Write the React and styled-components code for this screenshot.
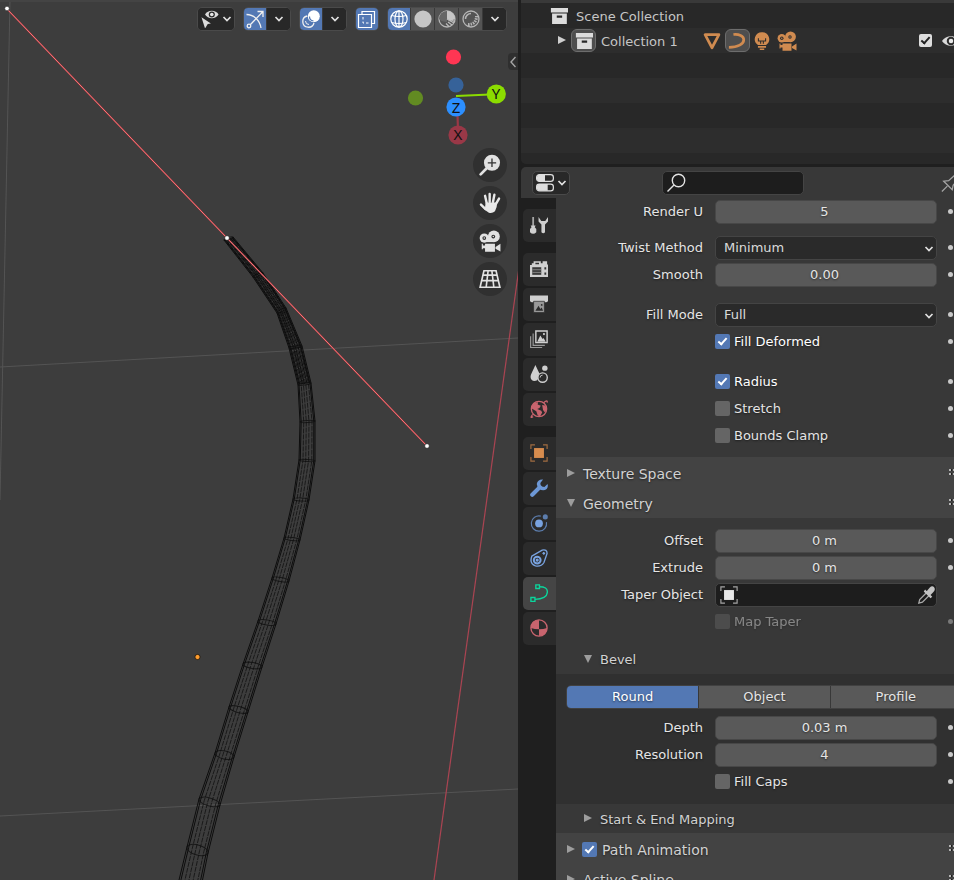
import React, { useState } from "react";
import styled, { createGlobalStyle, css } from "styled-components";

const GlobalStyle = createGlobalStyle`
  *, *::before, *::after { box-sizing: border-box; }
  body { margin: 0; background: #1f1f1f; overflow: hidden; }
  body, button, input, select { font-family: "DejaVu Sans", sans-serif; font-size: 13px; }
  button { padding: 0; border: 0; background: none; color: inherit; cursor: pointer; }
  svg { display: block; flex: none; }
`;

/* ---------- shell ---------- */

const Workspace = styled.div`
  display: grid;
  grid-template-columns: minmax(0, 1fr) 433px;
  gap: 3px;
  height: 100vh;
  color: #e5e5e5;
  line-height: 16px;
`;

const Viewport = styled.main`
  position: relative;
  display: flex;
  flex-direction: column;
  overflow: hidden;
  background: #3d3d3d;
  border-top: 2px solid #444;
`;

const Sidebar = styled.aside`
  display: flex;
  flex-direction: column;
  gap: 3px;
  min-width: 0;
  overflow: hidden;
`;

/* ---------- viewport ---------- */

const Scene = styled.svg`
  position: absolute;
  top: -2px;
  left: 0;
  width: 100%;
  height: 100vh;
`;

const ViewHeader = styled.header`
  position: relative;
  display: flex;
  justify-content: flex-end;
  gap: 8px;
  padding: 5px 11px 0 0;
`;

const ToolGroup = styled.div`
  display: flex;
  height: 24px;
  border: 1px solid #4a4a4a;
  border-radius: 5px;
  overflow: hidden;
  background: #282828;
`;

const fills = { on: "#5378b4", dark: "#282828", grey: "#545454" };

const ToolButton = styled.button`
  display: flex;
  align-items: center;
  justify-content: center;
  gap: 3px;
  width: ${(p) => (p.$wide ? "36px" : "24px")};
  background: ${(p) => fills[p.$fill || "dark"]};
  & + & { border-left: 1px solid #3a3a3a; }
  &:first-child { width: ${(p) => (p.$wide ? "36px" : "22px")}; }
`;

const Gizmo = styled.svg`
  position: absolute;
  top: 46px;
  right: 10px;
  font-family: "Noto Sans", sans-serif;
`;

const NavColumn = styled.nav`
  position: absolute;
  top: 146px;
  right: 11px;
  display: flex;
  flex-direction: column;
  gap: 4px;
`;

const NavButton = styled.button`
  display: flex;
  align-items: center;
  justify-content: center;
  width: 34px;
  height: 34px;
  border-radius: 50%;
  background: #303030;
`;

const RegionToggle = styled.button`
  position: absolute;
  top: 51px;
  right: 0;
  display: flex;
  align-items: center;
  justify-content: center;
  width: 10px;
  height: 17px;
  border-radius: 4px 0 0 4px;
  background: #2f2f2f;
`;

const rings = [
  [224, 240, 233, 237, 1],
  [253, 277, 263, 273, 1],
  [277, 313, 286, 308, 1],
  [289, 348, 302, 346, 1],
  [298, 385, 311, 383, 1],
  [300, 422, 315, 421, 1],
  [299, 460, 315, 461, 1],
  [293, 499, 309, 500, 1.5],
  [284, 538, 300, 540, 1.5],
  [272, 578, 289, 581, 2],
  [258, 621, 276, 624, 2.5],
  [243, 664, 262, 667, 3],
  [229, 707, 248, 712, 3],
  [215, 753, 234, 757, 4],
  [199, 799, 220, 805, 4],
  [187, 847, 208, 853, 5],
  [173, 905, 196, 912, 5],
];

const strand = (t) =>
  rings.map(([x1, y1, x2, y2]) => `${x1 + (x2 - x1) * t},${y1 + (y2 - y1) * t}`).join(" ");

function CurveScene() {
  return (
    <Scene viewBox="0 0 518 880" preserveAspectRatio="xMidYMid slice" aria-label="Curve in wireframe">
      <g stroke="#545454" strokeWidth="1">
        <path d="M0 367 518 338M0 816 518 789M10 0 0 500" />
      </g>
      <path d="M519 268 434 880" stroke="#ab4452" strokeWidth="1.2" />
      <g fill="none" stroke="#0d0d0d" strokeWidth="1">
        {[0, 0.08, 0.92, 1].map((t) => (
          <polyline key={t} points={strand(t)} />
        ))}
        {[0.25, 0.42, 0.6, 0.8].map((t) => (
          <polyline key={t} points={strand(t)} strokeOpacity=".75" strokeDasharray="5 1" />
        ))}
        {[0.15, 0.34, 0.5, 0.7, 0.87].map((t) => (
          <polyline key={t} points={strand(t).split(" ").slice(0, 5).join(" ")} />
        ))}
        {rings.map(([x1, y1, x2, y2, ry]) => (
          <ellipse
            key={y1}
            rx={Math.hypot(x2 - x1, y2 - y1) / 2}
            ry={ry}
            strokeOpacity=".75"
            transform={`translate(${(x1 + x2) / 2} ${(y1 + y2) / 2}) rotate(${(Math.atan2(y2 - y1, x2 - x1) * 180) / Math.PI})`}
          />
        ))}
      </g>
      <path d="M7 9 227 238 427 446" fill="none" stroke="#8e3a3f" strokeWidth="1.6" />
      <path d="M7 9 227 238 427 446" fill="none" stroke="#ff7478" strokeWidth="1" />
      <g fill="#fff" stroke="#222" strokeWidth=".6">
        <circle cx="7" cy="8.5" r="2.3" />
        <circle cx="227" cy="238" r="2.3" />
        <circle cx="427" cy="446" r="2.3" />
      </g>
      <circle cx="197.5" cy="657" r="2.6" fill="#ff9d2e" stroke="#1c1208" strokeWidth=".8" />
    </Scene>
  );
}

function AxisGizmo() {
  return (
    <Gizmo width="104" height="98" viewBox="404 48 104 98" aria-label="View orientation">
      <path d="M457.5 115 458 130" stroke="#9b3846" strokeWidth="2.2" />
      <circle cx="453.5" cy="57" r="7.6" fill="#ff3653" />
      <circle cx="456" cy="85" r="7.6" fill="#366299" />
      <circle cx="415.5" cy="98" r="7.6" fill="#628b22" />
      <path d="M456 96 490 94.5" stroke="#8bdc00" strokeWidth="2.2" />
      <circle cx="458" cy="135" r="9.6" fill="#993847" />
      <circle cx="496.3" cy="94" r="9.6" fill="#8bdc00" />
      <circle cx="456" cy="107" r="9.6" fill="#2c8fff" />
      <g fill="#111" fontSize="15" textAnchor="middle">
        <text x="458" y="140">X</text>
        <text x="496" y="99">Y</text>
        <text x="456" y="113">Z</text>
      </g>
    </Gizmo>
  );
}

/* ---------- icons ---------- */

const Svg = ({ size = 20, children, ...rest }) => (
  <svg width={size} height={size} viewBox="0 0 20 20" fill="none" aria-hidden="true" {...rest}>
    {children}
  </svg>
);

const Chevron = () => (
  <svg width="10" height="8" viewBox="0 0 10 8" fill="none" stroke="#e0e0e0" strokeWidth="1.7" aria-hidden="true">
    <path d="M1.5 2 5 5.500 8.500 2" />
  </svg>
);

const VisibilityIcon = () => (
  <Svg size={18}>
    <path d="M4.500 5C7.500-.5 16.500-.5 19.500 5 16.500 10.500 7.500 10.500 4.500 5z" fill="#dcdcdc" />
    <circle cx="12" cy="5" r="3.400" fill="#282828" />
    <circle cx="12" cy="5" r="2" fill="#e8e8e8" />
    <path d="M.5 8 11 15 7.500 15.500 4.500 20.500z" fill="#dcdcdc" />
  </Svg>
);

const GizmoIcon = () => (
  <Svg stroke="#f0f0f0" strokeWidth="1.300">
    <path d="M1.500 5.500C9 5.500 15 11.500 16 19" />
    <path d="M5.500 15.500 18 2.500M12.500 2.500H18V8" />
    <circle cx="4" cy="17" r="1.800" />
  </Svg>
);

const OverlayIcon = () => (
  <Svg>
    <path d="M6.200 7A5.700 5.700 0 1 0 13 14" stroke="#f0f0f0" strokeWidth="1.300" />
    <circle cx="12.800" cy="7.200" r="6" fill="#fff" />
    <path d="M8.500 7.500a4.500 4.500 0 0 0 4 4.500" stroke="#5378b4" strokeWidth="1.200" />
    <path d="M4.500 12a3.500 3.500 0 0 0 3.500 3.500" stroke="#f0f0f0" strokeWidth="1" />
  </Svg>
);

const XrayIcon = () => (
  <Svg stroke="#fff" strokeWidth="1.200">
    <path d="M5 5.500V2.500H17.500V14.500H14.500" />
    <path d="M1.500 5.500H14.500V18.500H1.500z" />
    <path d="M6 8V14H12" strokeDasharray="2.500 2" strokeWidth="1" />
  </Svg>
);

const WireGlobeIcon = () => (
  <Svg stroke="#fff" strokeWidth="1.200">
    <circle cx="10" cy="10" r="8.200" />
    <ellipse cx="10" cy="10" rx="4" ry="8.200" />
    <path d="M2.500 6.500Q10 8.500 17.500 6.500M2.500 13.500Q10 15.500 17.500 13.500M10 2V18" />
  </Svg>
);

const SolidIcon = () => (
  <Svg>
    <circle cx="10" cy="10" r="8.600" fill="#c6c6c6" />
  </Svg>
);

const MaterialIcon = () => (
  <Svg>
    <circle cx="10" cy="10" r="8" stroke="#b5b5b5" strokeWidth="1.300" />
    <path d="M10 2A8 8 0 0 0 2 10 9 9 0 0 0 10 13z" fill="#666" />
    <path d="M10 2A8 8 0 0 1 18 10L13 12.500 10 10z" fill="#c6c6c6" />
    <path d="M10 10 17 14M11 13l4 3M9 14.500l3 3M15 11l3 2" stroke="#bbb" strokeWidth="1.200" />
  </Svg>
);

const RenderedIcon = () => (
  <Svg stroke="#b5b5b5">
    <circle cx="10" cy="10" r="8" strokeWidth="1.300" />
    <path d="M4.500 10A5.500 5.500 0 0 1 10 4.500" strokeWidth="1.500" />
    <path d="M7 15.500Q15.500 15.500 15.500 7" strokeWidth="3" strokeDasharray="1.500 1" />
  </Svg>
);

const ZoomIcon = () => (
  <Svg size={22}>
    <path d="M1.500 18.500 7 13" stroke="#e2e2e2" strokeWidth="2.500" strokeLinecap="round" />
    <circle cx="11.800" cy="8" r="7.300" fill="#e2e2e2" />
    <path d="M8 8H15.600M11.800 4.200V11.800" stroke="#333" strokeWidth="1.200" />
  </Svg>
);

const HandIcon = () => (
  <Svg size={22}>
    <g stroke="#e8e8e8" strokeLinecap="round" strokeWidth="2.200">
      <path d="M7 10 5.500 3.500M9.700 9V1.800M12.700 9 14 2.500M15.300 11 18.200 6M6 15.500 1.800 11.500" />
    </g>
    <path d="M6 9.500 16.500 9.500Q16.500 14.500 14.500 17.500 12 19.800 9 18.800 5.500 17.500 3 13.500L5.500 14z" fill="#e8e8e8" />
  </Svg>
);

const CameraIcon = ({ color = "#e2e2e2", hole = "#303030", size = 22 }) => (
  <Svg size={size}>
    <circle cx="4.800" cy="7.300" r="4.200" fill={color} />
    <circle cx="13.500" cy="5.800" r="5.400" fill={color} />
    <path d="M5 7H13V11H5z" fill={color} />
    <circle cx="4.800" cy="7.300" r="1.700" fill={hole} />
    <circle cx="4.800" cy="7.300" r=".7" fill={color} />
    <circle cx="13" cy="6" r="1.700" fill={hole} />
    <circle cx="13" cy="6" r=".7" fill={color} />
    <path d="M2.500 12.500H3.500V14H5.500V12.500H14.500V19.800H5.500V16.500H3.500V17.500H2.500zM15 15.500 19.500 12.500V19.500L15 17z" fill={color} />
  </Svg>
);

const PerspectiveIcon = () => (
  <Svg size={22} stroke="#e2e2e2" strokeWidth="1.500">
    <path d="M4.500 2.500H15.500L19 17.500H1zM3.500 6.500H16.500M2.300 11.500H17.700M8.300 2.500 6.500 17.500M11.700 2.500 13.500 17.500" />
  </Svg>
);

const BoxIcon = () => (
  <Svg size={18}>
    <path d="M1 1H20V6H1zM2.300 7.200H18.700V19H2.300z" fill="#dcdcdc" />
    <path d="M7.500 9.500H13.500V12H7.500z" fill="#282828" />
  </Svg>
);

const MeshIcon = () => (
  <Svg size={18} stroke="#d08b50" strokeWidth="3" strokeLinejoin="round">
    <path d="M2.300 3H17.700L10 17.500z" />
  </Svg>
);

const CurveIcon = () => (
  <Svg size={18} stroke="#d08b50" strokeWidth="3">
    <path d="M6 2.800C12 2 17.500 4.500 17.500 8.500 17.500 13.500 11 17 1 17" />
  </Svg>
);

const LightIcon = () => (
  <Svg size={18}>
    <path d="M10 .2A7.800 7.800 0 0 1 14.500 14.500H5.500A7.800 7.800 0 0 1 10 .2z" fill="#d08b50" />
    <path d="M6 7V10H8.500V13M14 7V10H11.500V13M8 10H12" stroke="#2d2d2d" strokeWidth="1.200" />
    <path d="M5.500 16.500H14.500M7.500 19.200H12.500" stroke="#d08b50" strokeWidth="1.800" />
  </Svg>
);

const EyeIcon = () => (
  <Svg size={18}>
    <path d="M0 10C4 3 16 3 20 10 16 17 4 17 0 10z" fill="#d9d9d9" />
    <circle cx="10" cy="10" r="4.700" fill="#2d2d2d" />
    <circle cx="10" cy="10" r="2.500" fill="#e8e8e8" />
  </Svg>
);

const EditorIcon = () => (
  <Svg size={18}>
    <rect x=".7" y=".7" width="18.600" height="7.500" rx="3" stroke="#dedede" strokeWidth="1.400" />
    <path d="M3.500 .7H10V8.200H3.500Q1 8 1 4.500T3.500 .7z" fill="#dedede" />
    <rect x=".7" y="11.200" width="18.600" height="7.500" rx="3" stroke="#dedede" strokeWidth="1.400" />
    <path d="M3.500 11.200H13V18.700H3.500Q1 18.200 1 14.700T3.500 11.200z" fill="#dedede" />
  </Svg>
);

const SearchIcon = () => (
  <Svg stroke="#e2e2e2" strokeWidth="1.400">
    <circle cx="12.500" cy="7.500" r="6.200" />
    <path d="M8 12 1.500 18.500" />
  </Svg>
);

const PinIcon = () => (
  <Svg size={18} stroke="#a5a5a5" strokeWidth="1.400">
    <path d="M1 19.500 7 13.500M3 8 12.500 17.500 13.500 12.500 20 5 15.500 1 8.500 7.500z" />
  </Svg>
);

const EyedropperIcon = () => (
  <Svg size={18}>
    <path d="M2 19 3 15 10.500 7.500 13.500 10.500 6 18z" stroke="#aaa" strokeWidth="1.400" />
    <path d="M9 4 17 12 15 13.500 7.500 6zM10.500 6 14 2Q17-1 19 1.500 21 4 18 7L14.500 10.500z" fill="#c4c4c4" />
  </Svg>
);

const ObjectIcon = ({ frame, fill }) => (
  <Svg size={18}>
    <path d="M1 5.500V1H5.500M14.500 1H19V5.500M19 14.500V19H14.500M5.500 19H1V14.500" stroke={frame} strokeWidth="1.300" />
    <path d="M4.500 4.500H15.500V15.500H4.500z" fill={fill} />
  </Svg>
);

const tabIcons = {
  Tool: (
    <Svg size={18}>
      <path d="M3.500 1V11" stroke="#a5a5a5" strokeWidth="2" />
      <path d="M.8 10.500H6.200L5.300 12.500 7 14.500V18Q3.500 21.500 0 18V14.500L1.700 12.500z" fill="#cfcfcf" />
      <path d="M9.500 1V6L12.700 9.500V18Q14.700 20.500 16.700 18V9.500L20 6V1L17 5.500H12.500z" fill="#cfcfcf" />
    </Svg>
  ),
  Render: (
    <Svg size={18}>
      <path d="M0 5.500H2V3.500H4V1.500H12V3.500H14V1.500H19V5H20V19H0z" fill="#cfcfcf" />
      <path d="M2.500 8H12.500V16.500H2.500z" fill="#3a3a3a" />
      <path d="M2.500 10.800H12.500M2.500 13.800H12.500" stroke="#888" />
      <path d="M16 8h2v2.500h-2zM16 14h2v2.500h-2zM6 3h4v1.800h-4z" fill="#333" />
    </Svg>
  ),
  Output: (
    <Svg size={18}>
      <path d="M0 .5H20V6Q20 8 18 8H2Q0 8 0 6z" fill="#cfcfcf" />
      <path d="M4 7H16V19.500H4z" fill="#999" stroke="#2b2b2b" strokeWidth=".8" />
      <path d="M6 17.500 9.500 12 11.500 15.500 13 14 14.500 17.500z" fill="#2b2b2b" />
      <circle cx="13" cy="11" r="1" fill="#2b2b2b" />
    </Svg>
  ),
  "View Layer": (
    <Svg size={18}>
      <path d="M6.500 1.200H19V14H6.500z" stroke="#cfcfcf" strokeWidth="1.600" />
      <path d="M8 13 11.500 6 14 10 15 9 17.500 13z" fill="#cfcfcf" />
      <circle cx="15.500" cy="4.500" r="1.200" fill="#cfcfcf" />
      <path d="M3.500 4V17H16.500M.7 7V19.500H13.500" stroke="#999" strokeWidth="1.300" />
    </Svg>
  ),
  Scene: (
    <Svg size={18}>
      <path d="M6 0Q9 6.500 11 10.500L8 17Q4 19 1.500 16-.5 13 2 8.500z" fill="#cfcfcf" />
      <circle cx="16.500" cy="3.500" r="3" fill="#cfcfcf" />
      <circle cx="14" cy="14" r="5.200" fill="#2b2b2b" stroke="#cfcfcf" strokeWidth="1.500" />
      <path d="M11.200 14Q11.200 11.300 14 11.200" stroke="#cfcfcf" />
    </Svg>
  ),
  World: (
    <Svg size={18}>
      <circle cx="10" cy="10" r="8.500" stroke="#c8646e" strokeWidth="1.500" />
      <path d="M2 6.500 5 3 9 2.500 8.500 5 12 6.500 10.500 9 8 10 12.500 12 13.500 14 11 18.500 8.500 17 7 12.500 2 9.500zM13.500 5.500 17 6 18.500 9.500 17 14.500 14.500 11z" fill="#c8646e" />
      <path d="M15 3Q20-1 19 3M3 16Q-1 21 3.500 18.500" stroke="#c8646e" strokeWidth="1.400" />
    </Svg>
  ),
  Object: <ObjectIcon frame="#a06c41" fill="#d68c4e" />,
  Modifiers: (
    <Svg size={18}>
      <path d="M2.500 17.500 11 9" stroke="#6d98d6" strokeWidth="4.600" strokeLinecap="round" />
      <path d="M14.500 .5Q8.500 0 7.500 5.500 8 9 10 11 15 14 18.500 11 20.500 8.500 19.500 5.500L16 9 12 8 11.500 4.500z" fill="#6d98d6" />
    </Svg>
  ),
  Particles: (
    <Svg size={18}>
      <path d="M12 2.300A8.500 8.500 0 1 0 18.300 9" stroke="#5c7dad" strokeWidth="1.300" />
      <circle cx="10" cy="10.500" r="4.300" fill="#79a3e0" />
      <circle cx="17" cy="3.200" r="2.800" fill="#5c7dad" />
    </Svg>
  ),
  Physics: (
    <Svg size={18} stroke="#79a3e0" strokeWidth="1.500">
      <path d="M2 8 13.500 1.300Q19 0 19 5L15.500 15Q12.500 20 6 18.800-1 16 2 8z" />
      <circle cx="8" cy="12.300" r="3.800" strokeWidth="2.200" />
      <circle cx="8" cy="12.300" r="1" fill="#79a3e0" />
      <path d="M13.800 4.800h3M15.300 3.300v3" />
    </Svg>
  ),
  Data: (
    <Svg size={18} stroke="#0bd59c" strokeWidth="1.500">
      <path d="M10.500 3Q19.500 3 19.300 9 19 16.500 5.500 17" />
      <path d="M6.500 1H10.500V5H6.500zM1 15H5.500V19.300H1z" />
    </Svg>
  ),
  Material: (
    <Svg size={18}>
      <circle cx="10" cy="10" r="9" stroke="#c8646e" strokeWidth="1.500" />
      <path d="M10 11.500V1Q1 1 1 10 5 11.500 10 11.500zM10 11.500Q15 11.500 19 10 18.500 19 10 19z" fill="#c8646e" />
    </Svg>
  ),
};

/* ---------- outliner ---------- */

const Outliner = styled.section`
  flex: none;
  height: 164px;
  overflow: hidden;
  border-top: 3px solid #393939;
  border-radius: 0 0 0 5px;
  background: repeating-linear-gradient(#282828 0 25px, #2d2d2d 25px 50px);
`;

const OutlinerRow = styled.div`
  display: flex;
  align-items: center;
  width: 460px;
  height: 25px;
  padding-left: ${(p) => (p.$nested ? "32px" : "29px")};
  color: #c5c5c5;
`;

const RowName = styled.span`
  margin-top: 2px;
  margin-left: ${(p) => (p.$nested ? "5px" : "8px")};
`;

const ItemButton = styled.button`
  display: flex;
  align-items: center;
  justify-content: center;
  width: 25px;
  height: 23px;
  border-radius: 6px;
  ${(p) =>
    p.$active &&
    css`
      border: 1px solid #6d6d6d;
      background: #4e4e4e;
    `}
`;

const DataIcons = styled.div`
  display: flex;
  margin-left: 22px;
`;

const RowControls = styled.div`
  display: flex;
  align-items: center;
  gap: 10px;
  margin-left: 119px;
`;

const Disclosure = styled.button`
  display: flex;
  align-items: center;
  justify-content: center;
  width: 18px;
  height: ${(p) => (p.$tall ? "24px" : "18px")};
`;

const Triangle = ({ open, color = "#9d9d9d" }) => (
  <svg width="10" height="12" viewBox="0 0 10 12" fill={color} aria-hidden="true">
    <path d={open ? "M1 1H9L5 9z" : "M1 1V9L9 5z"} />
  </svg>
);

/* ---------- properties editor ---------- */

const Properties = styled.section`
  display: flex;
  flex-direction: column;
  flex: 1;
  min-height: 0;
  overflow: hidden;
  border-radius: 5px 0 0 0;
  background: #383838;
`;

const PropertiesHeader = styled.header`
  display: flex;
  flex: none;
  width: 460px;
  height: 31px;
  padding: 4px 0 0 11px;
`;

const EditorButton = styled.button`
  display: flex;
  align-items: center;
  justify-content: center;
  gap: 3px;
  width: 38px;
  height: 24px;
  border: 1px solid #4a4a4a;
  border-radius: 5px;
  background: #282828;
`;

const SearchBox = styled.label`
  display: flex;
  align-items: center;
  width: 142px;
  height: 24px;
  margin: 0 137px 0 92px;
  padding-left: 3px;
  border: 1px solid #444;
  border-radius: 5px;
  background: #1d1d1d;
  input {
    flex: 1;
    min-width: 0;
    border: 0;
    outline: 0;
    background: none;
    color: #e5e5e5;
  }
`;

const PropertiesBody = styled.div`
  display: grid;
  grid-template-columns: 35px 412px;
  flex: 1;
  min-height: 0;
`;

const TabList = styled.nav`
  display: flex;
  flex-direction: column;
  gap: 11px;
  padding: 11px 0 0 2px;
  background: #1f1f1f;
`;

const TabGroup = styled.div`
  display: flex;
  flex-direction: column;
  gap: 2px;
`;

const Tab = styled.button`
  display: flex;
  align-items: center;
  justify-content: center;
  height: 33px;
  padding: 0 1px 1px 0;
  border-radius: 5px 0 0 5px;
  background: ${(p) => (p.$active ? "#454545" : "#2b2b2b")};
`;

const PanelScroll = styled.div`
  overflow: hidden;
  text-shadow: 0 1px 2px rgba(0, 0, 0, 0.5);
`;

const Fields = styled.div`
  padding: ${(p) => p.$pad || "0"};
  background: ${(p) => (p.$sub ? "#303030" : "#383838")};
`;

const Cluster = styled.div`
  margin-bottom: ${(p) => p.$gap};
`;

const Row = styled.div`
  display: grid;
  grid-template-columns: 148px 222px 5px;
  column-gap: 11px;
  align-items: center;
  height: 27px;
  opacity: ${(p) => (p.$dim ? 0.45 : 1)};
`;

const RowLabel = styled.label`
  padding-right: 1px;
  text-align: right;
`;

const NumberInput = styled.input`
  width: 100%;
  height: 24px;
  padding: 0 4px 1px 1px;
  border: 1px solid #474747;
  border-radius: 5px;
  outline: 0;
  background: #595959;
  color: #e5e5e5;
  text-align: center;
  text-shadow: inherit;
`;

const SelectWrap = styled.div`
  display: grid;
  align-items: center;
  & > * { grid-area: 1 / 1; }
  & > svg { justify-self: end; margin: 2px 3px 0 0; pointer-events: none; }
`;

const Select = styled.select`
  appearance: none;
  width: 100%;
  height: 24px;
  padding: 0 8px;
  border: 1px solid #444;
  border-radius: 5px;
  outline: 0;
  background: #2a2a2a;
  color: #dadada;
`;

const ObjectSlot = styled.div`
  display: flex;
  align-items: center;
  height: 24px;
  padding: 0 1px 0 4px;
  border: 1px solid #444;
  border-radius: 5px;
  background: #1d1d1d;
  input {
    flex: 1;
    min-width: 0;
    border: 0;
    outline: 0;
    background: none;
    color: #e5e5e5;
  }
`;

const CheckLabel = styled.label`
  display: flex;
  align-items: center;
  gap: 4px;
  grid-column: 2;
  color: ${(p) => (p.$on ? "#fff" : "inherit")};
`;

const checkMark = css`
  &:checked::after {
    content: "";
    width: 5px;
    height: 9px;
    margin-bottom: 2px;
    border: solid ${(p) => (p.$light ? "#222" : "#fff")};
    border-width: 0 2px 2px 0;
    transform: rotate(42deg);
  }
`;

const CheckBox = styled.input`
  appearance: none;
  display: inline-flex;
  flex: none;
  align-items: center;
  justify-content: center;
  width: ${(p) => (p.$light ? "13px" : "15px")};
  height: ${(p) => (p.$light ? "13px" : "15px")};
  margin: 0;
  border-radius: 2px;
  background: ${(p) => (p.$light ? "#dedede" : "#656565")};
  &:checked { background: ${(p) => (p.$light ? "#dedede" : "#5378b4")}; }
  ${checkMark}
`;

const AnimateDot = styled.button`
  grid-column: 3;
  width: 5px;
  height: 5px;
  border-radius: 50%;
  background: #c9c9c9;
`;

const HeaderBand = styled.div`
  padding-top: 1px;
  background: #434343;
`;

const PanelHeader = styled.div`
  display: flex;
  align-items: center;
  height: ${(p) => (p.$nested && !p.$open ? "29px" : "30px")};
  padding-top: 1px;
  padding-left: ${(p) => (p.$nested ? "27px" : "10px")};
  font-size: ${(p) => (p.$nested ? "13px" : "14px")};
  color: #d2d2d2;
`;

const PanelToggle = styled.button`
  display: flex;
  align-items: center;
  gap: 7px;
  font-size: inherit;
  text-shadow: inherit;
`;

const PanelCheck = styled.label`
  display: flex;
  align-items: center;
  gap: 5px;
  margin-left: 6px;
`;

const Grip = styled.span`
  width: 15px;
  height: 6px;
  margin: 0 4px 3px auto;
  background: repeating-linear-gradient(90deg, #b5b5b5 0 2px, #1a1a1a 2px 3px, transparent 3px 4px);
  mask: linear-gradient(#000 0 2px, transparent 2px 4px, #000 4px 6px);
`;

const Segmented = styled.div`
  display: grid;
  grid-template-columns: repeat(3, 1fr);
  width: 396px;
  height: 24px;
  margin: 0 0 5px 10px;
  border: 1px solid #414141;
  border-radius: 5px;
  overflow: hidden;
`;

const Segment = styled.button`
  padding-bottom: 1px;
  background: ${(p) => (p.$active ? "#5378b4" : "#595959")};
  color: ${(p) => (p.$active ? "#fff" : "#e5e5e5")};
  text-shadow: inherit;
  & + & { border-left: 1px solid #383838; }
`;

const idOf = (label) => label.toLowerCase().replace(/\W+/g, "-");

function NumberRow({ label, value }) {
  return (
    <Row>
      <RowLabel htmlFor={idOf(label)}>{label}</RowLabel>
      <NumberInput id={idOf(label)} defaultValue={value} />
      <AnimateDot aria-label={`Animate ${label}`} />
    </Row>
  );
}

function SelectRow({ label, options }) {
  return (
    <Row>
      <RowLabel htmlFor={idOf(label)}>{label}</RowLabel>
      <SelectWrap>
        <Select id={idOf(label)}>
          {options.map((o) => (
            <option key={o}>{o}</option>
          ))}
        </Select>
        <Chevron />
      </SelectWrap>
      <AnimateDot aria-label={`Animate ${label}`} />
    </Row>
  );
}

function CheckRow({ label, initial = false, disabled = false }) {
  const [on, setOn] = useState(initial);
  return (
    <Row $dim={disabled}>
      <CheckLabel $on={on}>
        <CheckBox type="checkbox" checked={on} disabled={disabled} onChange={() => setOn(!on)} />
        {label}
      </CheckLabel>
      <AnimateDot aria-label={`Animate ${label}`} disabled={disabled} />
    </Row>
  );
}

function Panel({ title, open = false, nested = false }) {
  return (
    <PanelHeader $nested={nested} $open={open}>
      <PanelToggle aria-expanded={open}>
        <Triangle open={open} />
        {title}
      </PanelToggle>
      {!nested && <Grip />}
    </PanelHeader>
  );
}

const tabGroups = [
  ["Tool"],
  ["Render", "Output", "View Layer", "Scene", "World"],
  ["Object", "Modifiers", "Particles", "Physics", "Data", "Material"],
];

export default function App() {
  const [tab, setTab] = useState("Data");
  const [shape, setShape] = useState("Round");

  return (
    <Workspace>
      <GlobalStyle />
      <Viewport>
        <CurveScene />
        <ViewHeader>
          <ToolGroup>
            <ToolButton $wide aria-label="Object types visibility">
              <VisibilityIcon />
              <Chevron />
            </ToolButton>
          </ToolGroup>
          <ToolGroup>
            <ToolButton $fill="on" aria-label="Show gizmos"><GizmoIcon /></ToolButton>
            <ToolButton aria-label="Gizmo options"><Chevron /></ToolButton>
          </ToolGroup>
          <ToolGroup>
            <ToolButton $fill="on" aria-label="Show overlays"><OverlayIcon /></ToolButton>
            <ToolButton aria-label="Overlay options"><Chevron /></ToolButton>
          </ToolGroup>
          <ToolGroup>
            <ToolButton $fill="on" aria-label="Toggle X-ray"><XrayIcon /></ToolButton>
          </ToolGroup>
          <ToolGroup>
            <ToolButton $fill="on" aria-label="Wireframe"><WireGlobeIcon /></ToolButton>
            <ToolButton $fill="grey" aria-label="Solid"><SolidIcon /></ToolButton>
            <ToolButton $fill="grey" aria-label="Material preview"><MaterialIcon /></ToolButton>
            <ToolButton $fill="grey" aria-label="Rendered"><RenderedIcon /></ToolButton>
            <ToolButton aria-label="Shading options"><Chevron /></ToolButton>
          </ToolGroup>
        </ViewHeader>
        <AxisGizmo />
        <NavColumn>
          <NavButton aria-label="Zoom"><ZoomIcon /></NavButton>
          <NavButton aria-label="Pan"><HandIcon /></NavButton>
          <NavButton aria-label="Camera view"><CameraIcon /></NavButton>
          <NavButton aria-label="Perspective"><PerspectiveIcon /></NavButton>
        </NavColumn>
        <RegionToggle aria-label="Show sidebar">
          <svg width="6" height="12" viewBox="0 0 6 12" fill="none" stroke="#a5a5a5" strokeWidth="1.4">
            <path d="M5.500 1 1 6 5.500 11" />
          </svg>
        </RegionToggle>
      </Viewport>

      <Sidebar>
        <Outliner>
          <OutlinerRow>
            <BoxIcon />
            <RowName>Scene Collection</RowName>
          </OutlinerRow>
          <OutlinerRow $nested>
            <Disclosure aria-label="Expand Collection 1"><Triangle color="#cfcfcf" /></Disclosure>
            <ItemButton $active aria-label="Collection"><BoxIcon /></ItemButton>
            <RowName $nested>Collection 1</RowName>
            <DataIcons>
              <ItemButton aria-label="Meshes"><MeshIcon /></ItemButton>
              <ItemButton $active aria-label="Curves"><CurveIcon /></ItemButton>
              <ItemButton aria-label="Lights"><LightIcon /></ItemButton>
              <ItemButton aria-label="Cameras"><CameraIcon size={20} color="#d08b50" hole="#2d2d2d" /></ItemButton>
            </DataIcons>
            <RowControls>
              <CheckBox $light type="checkbox" defaultChecked aria-label="Include Collection 1" />
              <Disclosure aria-label="Hide Collection 1"><EyeIcon /></Disclosure>
            </RowControls>
          </OutlinerRow>
        </Outliner>

        <Properties>
          <PropertiesHeader>
            <EditorButton aria-label="Editor type">
              <EditorIcon />
              <Chevron />
            </EditorButton>
            <SearchBox>
              <SearchIcon />
              <input type="text" aria-label="Search properties" />
            </SearchBox>
            <Disclosure $tall aria-label="Pin"><PinIcon /></Disclosure>
          </PropertiesHeader>

          <PropertiesBody>
            <TabList>
              {tabGroups.map((group) => (
                <TabGroup key={group[0]}>
                  {group.map((name) => (
                    <Tab key={name} $active={name === tab} aria-label={name} onClick={() => setTab(name)}>
                      {tabIcons[name]}
                    </Tab>
                  ))}
                </TabGroup>
              ))}
            </TabList>

            <PanelScroll>
              <Fields $pad="0 0 8px">
                <Cluster $gap="9px">
                  <NumberRow label="Render U" value="5" />
                </Cluster>
                <Cluster $gap="13px">
                  <SelectRow label="Twist Method" options={["Minimum", "Tangent", "Z-Up"]} />
                  <NumberRow label="Smooth" value="0.00" />
                </Cluster>
                <Cluster $gap="13px">
                  <SelectRow label="Fill Mode" options={["Full", "Back", "Front", "Half"]} />
                  <CheckRow label="Fill Deformed" initial />
                </Cluster>
                <CheckRow label="Radius" initial />
                <CheckRow label="Stretch" />
                <CheckRow label="Bounds Clamp" />
              </Fields>

              <HeaderBand>
                <Panel title="Texture Space" />
                <Panel title="Geometry" open />
              </HeaderBand>

              <Fields $pad="9px 0">
                <NumberRow label="Offset" value="0 m" />
                <NumberRow label="Extrude" value="0 m" />
                <Row>
                  <RowLabel htmlFor="taper-object">Taper Object</RowLabel>
                  <ObjectSlot>
                    <ObjectIcon frame="#a5a5a5" fill="#e8e8e8" />
                    <input id="taper-object" type="text" />
                    <Disclosure aria-label="Pick taper object"><EyedropperIcon /></Disclosure>
                  </ObjectSlot>
                </Row>
                <CheckRow label="Map Taper" disabled />
              </Fields>
              <Panel title="Bevel" open nested />

              <Fields $sub $pad="11px 0 9px">
                <Segmented>
                  {["Round", "Object", "Profile"].map((name) => (
                    <Segment
                      key={name}
                      $active={name === shape}
                      aria-pressed={name === shape}
                      onClick={() => setShape(name)}
                    >
                      {name}
                    </Segment>
                  ))}
                </Segmented>
                <NumberRow label="Depth" value="0.03 m" />
                <NumberRow label="Resolution" value="4" />
                <CheckRow label="Fill Caps" />
              </Fields>
              <Panel title="Start & End Mapping" nested />

              <HeaderBand>
                <PanelHeader>
                  <PanelToggle aria-label="Expand Path Animation"><Triangle /></PanelToggle>
                  <PanelCheck>
                    <CheckBox type="checkbox" defaultChecked />
                    Path Animation
                  </PanelCheck>
                  <Grip />
                </PanelHeader>
                <Panel title="Active Spline" />
              </HeaderBand>
            </PanelScroll>
          </PropertiesBody>
        </Properties>
      </Sidebar>
    </Workspace>
  );
}
